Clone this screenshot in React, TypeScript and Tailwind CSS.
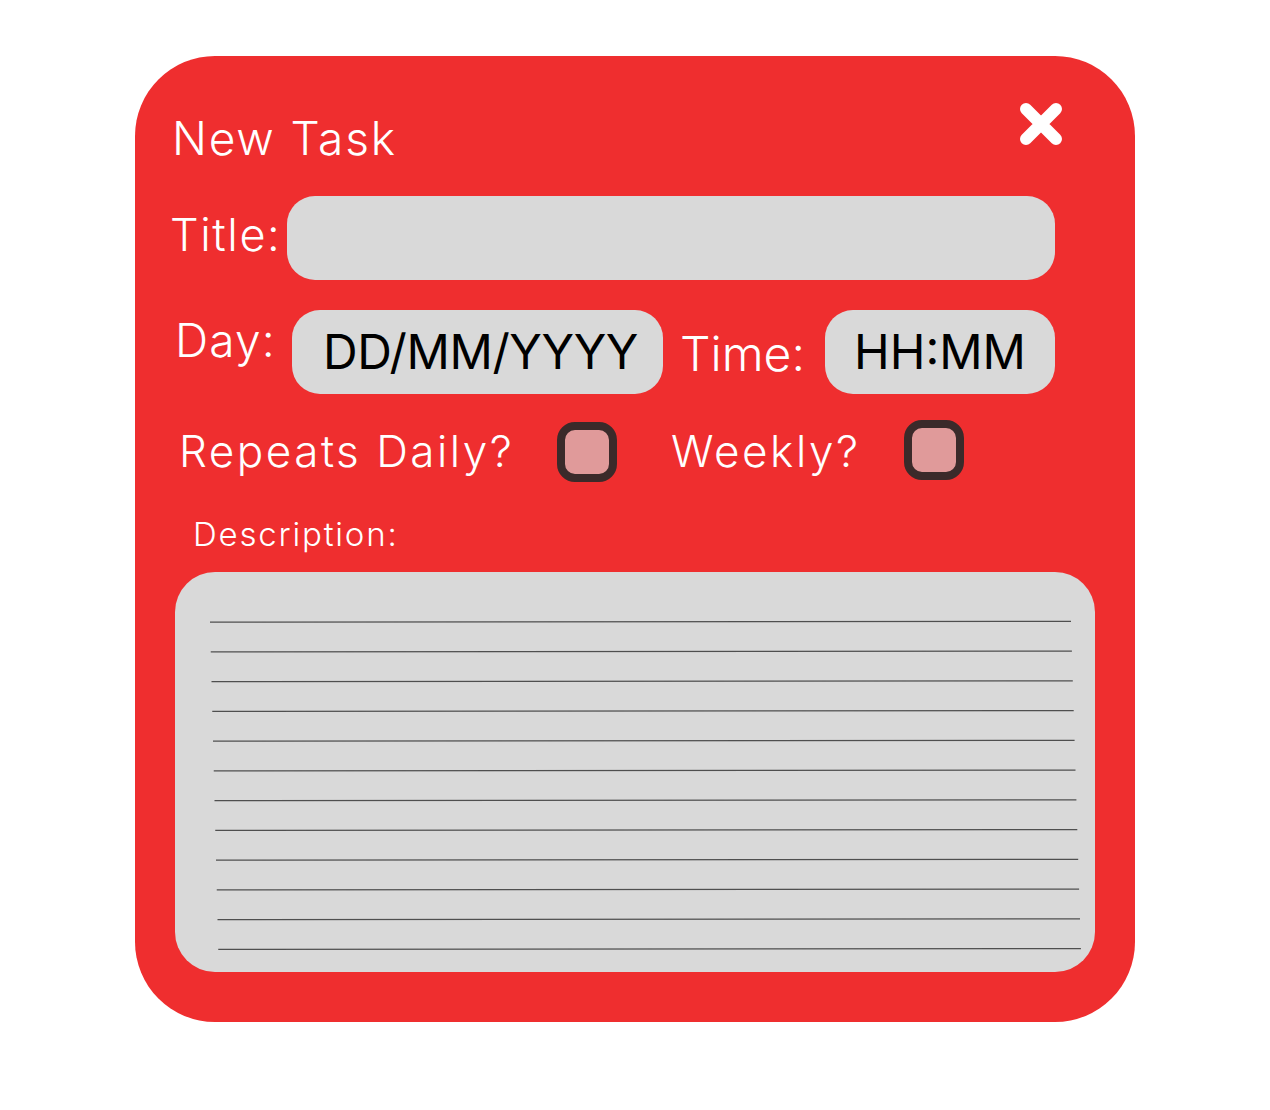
import React from "react";

const LINE_COUNT = 12;

const CloseIcon: React.FC = () => (
  <svg width="42" height="42" viewBox="0 0 42 42" fill="none">
    <path
      d="M6 6L36 36M36 6L6 36"
      stroke="white"
      strokeWidth="12"
      strokeLinecap="round"
    />
  </svg>
);

const Checkbox: React.FC<{ className?: string }> = ({ className = "" }) => (
  <div
    className={`w-[60px] h-[60px] shrink-0 rounded-[18px] border-[8px] border-[#3b2a2a] bg-[#e09a9a] ${className}`}
  />
);

const RuledLines: React.FC = () => (
  <svg width="920" height="400" viewBox="0 0 920 400">
    {Array.from({ length: LINE_COUNT }).map((_, i) => {
      const y = 49.7 + i * 29.75;
      return (
        <line
          key={i}
          x1={35 + i * 0.75}
          y1={y + 0.4}
          x2={896 + i * 0.9}
          y2={y - 0.4}
          stroke="#4f4f4f"
          strokeWidth="1.3"
        />
      );
    })}
  </svg>
);

export default function App() {
  return (
    <div
      className="min-h-screen bg-white pt-[56px]"
      style={{ fontFamily: "Inter, 'Noto Sans', sans-serif" }}
    >
      <div className="mx-auto flex h-[966px] w-[1000px] flex-col rounded-[80px] bg-[#ef2e2f]">
        {/* header */}
        <div className="flex items-start justify-between pl-[37px] pr-[73px] pt-[47px]">
          <h1 className="mt-[12px] text-[46px] font-light leading-none tracking-[1.8px] text-white">
            New Task
          </h1>
          <button className="h-[42px] w-[42px]">
            <CloseIcon />
          </button>
        </div>

        {/* title */}
        <div className="mt-[35px] flex items-start pl-[35px]">
          <label className="mt-[16px] w-[117px] shrink-0 text-[45px] font-light leading-none tracking-[1.6px] text-white">
            Title:
          </label>
          <div className="h-[84px] w-[768px] rounded-[28px] bg-[#d9d9d9]" />
        </div>

        {/* day / time */}
        <div className="mt-[30px] flex items-start pl-[40px]">
          <label className="mt-[7px] w-[117px] shrink-0 text-[46px] font-light leading-none tracking-[1.2px] text-white">
            Day:
          </label>
          <div className="flex h-[84px] w-[371px] shrink-0 items-center justify-center rounded-[28px] bg-[#d9d9d9] pl-[6px] text-[48px] leading-none tracking-[-0.4px] text-black">
            DD/MM/YYYY
          </div>
          <label className="ml-[17px] mt-[20px] w-[145px] shrink-0 text-[48px] font-light leading-none text-white">
            Time:
          </label>
          <div className="flex h-[84px] w-[230px] shrink-0 items-center justify-center rounded-[28px] bg-[#d9d9d9] text-[48px] leading-none text-black">
            HH:MM
          </div>
        </div>

        {/* repeats */}
        <div className="mt-[26px] flex items-start pl-[44px]">
          <label className="mt-[9px] w-[378px] shrink-0 text-[44px] font-light leading-none tracking-[2.5px] text-white">
            Repeats Daily?
          </label>
          <Checkbox className="mt-[2px]" />
          <label className="ml-[54px] mt-[9px] w-[233px] shrink-0 text-[44px] font-light leading-none tracking-[2.6px] text-white">
            Weekly?
          </label>
          <Checkbox />
        </div>

        {/* description */}
        <div className="mt-[36px] pl-[58px] text-[33px] font-light leading-none tracking-[1.8px] text-white">
          Description:
        </div>
        <div className="ml-[40px] mt-[21px] h-[400px] w-[920px] overflow-hidden rounded-[40px] bg-[#d9d9d9]">
          <RuledLines />
        </div>
      </div>
    </div>
  );
}
